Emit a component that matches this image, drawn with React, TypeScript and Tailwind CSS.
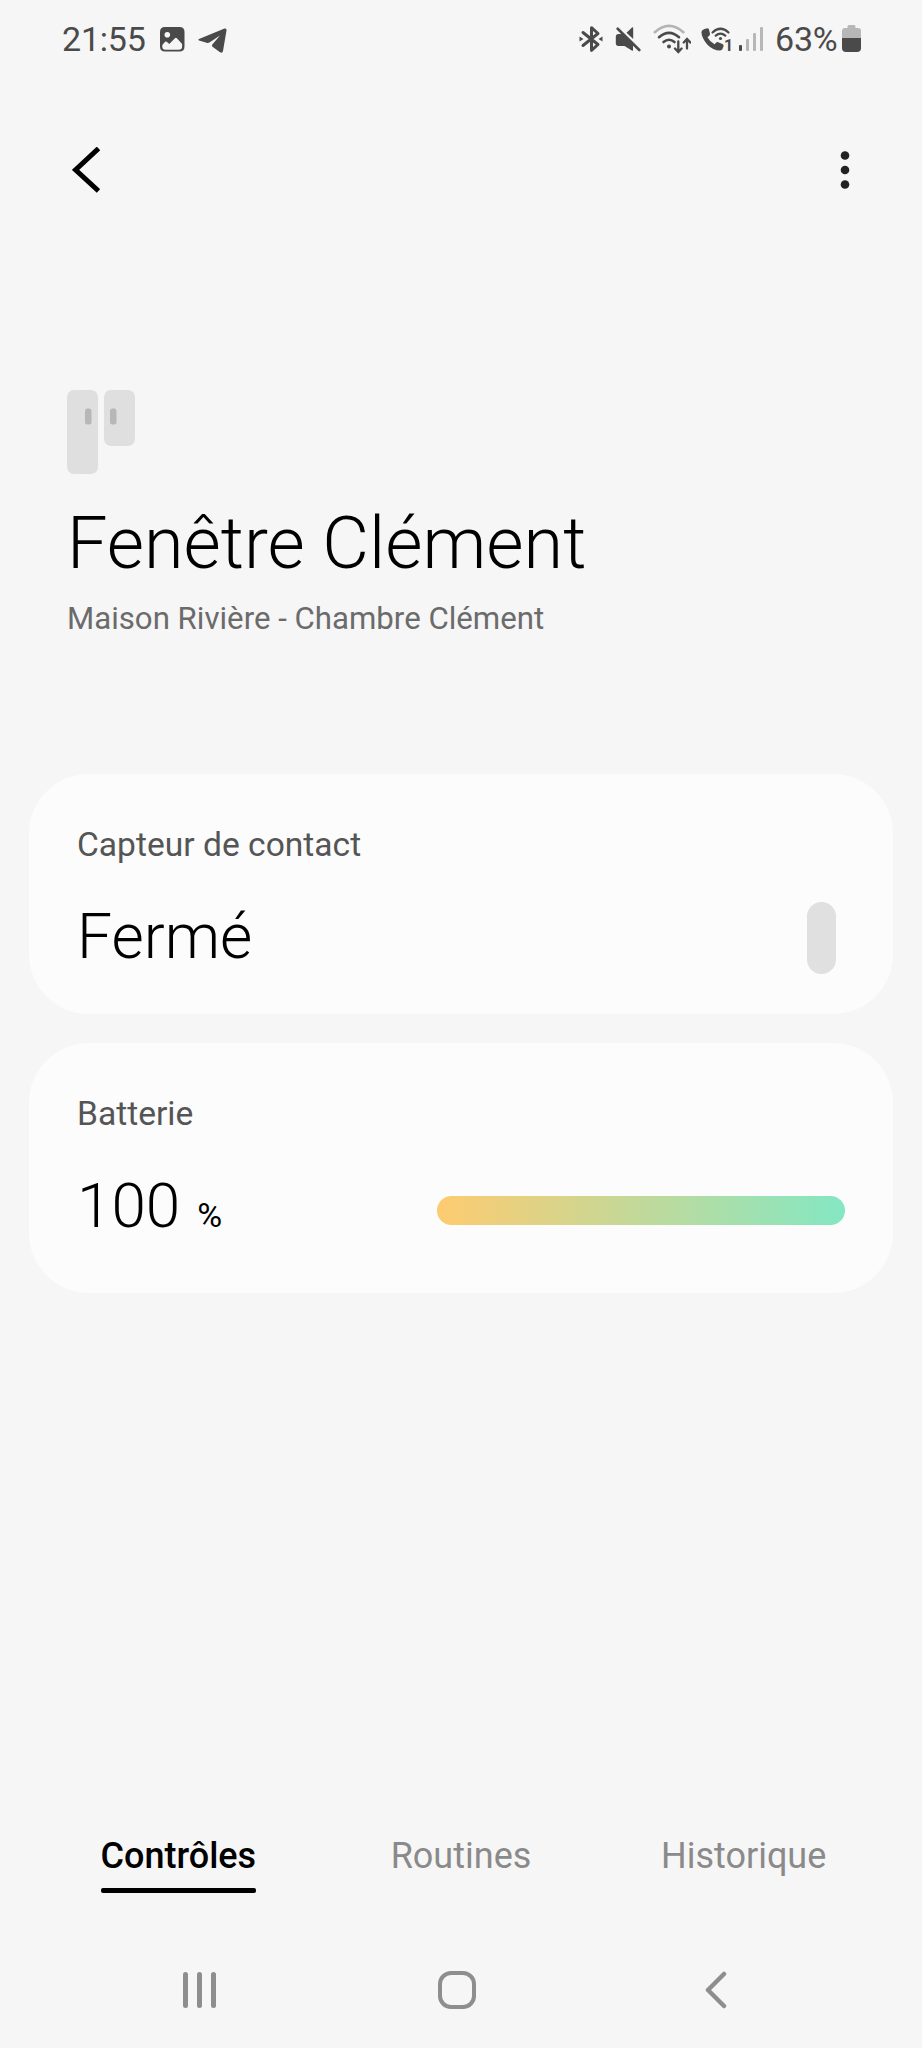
import React, { FC, ReactNode } from "react";

const StatusBar: FC = () => (
  <div className="flex h-[78px] items-center pl-[62px] pr-[61px] text-[34px] text-[#4a4a4a]">
    <span className="w-[84px] tracking-[-0.2px]">21:55</span>

    {/* picture */}
    <svg className="ml-[14px] h-[30px] w-[25px]" viewBox="0 0 25 30">
      <path
        fillRule="evenodd"
        fill="currentColor"
        d="M5 3h14.500q5 0 5 5v14.500q0 5-5 5H5q-5 0-5-5V8q0-5 5-5zM7.300 8a2.800 2.800 0 1 0 0 5.600a2.800 2.800 0 1 0 0-5.600zM2.300 21v1.500q0 3.300 3.200 3.300h13.200q3.400 0 3.400-3.300v-2.600l-5.200-5.600q-1-1-2 0l-5.600 5.700l-2.600-2.300q-.8-.6-1.600.1z"
      />
    </svg>

    {/* telegram */}
    <svg className="ml-[13px] h-[30px] w-[29px]" viewBox="0 0 29 30">
      <path
        fill="currentColor"
        d="M1 15L26.500 4.600q2.200-.6 2 1.800L25 27q-.5 2.600-3 1.200L14.500 22.700q-1.200-1 0-2.400L22 11.500l-10.600 7q-1.200.8-2.800.3L1 16.500q-1.400-.7 0-1.500z"
      />
    </svg>

    {/* bluetooth */}
    <svg
      className="ml-auto h-[30px] w-[24px]"
      viewBox="0 0 24 30"
      fill="none"
      stroke="currentColor"
      strokeWidth="3"
      strokeLinejoin="round"
      strokeLinecap="round"
    >
      <path d="M4 8.500L19 20.500L12.500 26.300V3.700L19 9.500L4 21.500" />
      <path d="M.5 12.500L4.500 15L.5 17.500zM23.500 12.500L19.500 15L23.500 17.500z" fill="currentColor" stroke="none" />
    </svg>

    {/* sound off */}
    <svg className="ml-[12px] h-[30px] w-[26px]" viewBox="0 0 26 30">
      <path
        fill="currentColor"
        d="M3.500 10H7l11 10.500V26q0 1.300-1.200.6L9.500 22H3.500Q.8 22 .8 19v-6q0-3 2.700-3zM11.500 8.800L17 3.600q1.200-.8 1.200.6V15z"
      />
      <path d="M2.700 4.700L24.300 26" stroke="currentColor" strokeWidth="2.600" strokeLinecap="round" />
    </svg>

    {/* wifi */}
    <svg
      className="ml-[12px] h-[30px] w-[38px]"
      viewBox="0 0 38 30"
      fill="none"
      stroke="currentColor"
      strokeWidth="2.600"
      strokeLinecap="round"
    >
      <path d="M1.800 8.200Q16-4.500 30.400 8.200" stroke="#b3b3b3" />
      <path d="M6 13.200Q16 4.500 26 13.200M10.500 18Q16 13.500 21.500 18" />
      <path d="M25.300 17.500V27M22 24.500L25.300 28L28.600 24.500M34 24.500V15.500M30.700 18.500L34 15L37.300 18.500" strokeWidth="2.300" />
      <circle cx="16" cy="22.500" r="2" fill="currentColor" stroke="none" />
    </svg>

    {/* wifi calling */}
    <span className="ml-[10px] flex h-[30px] w-[31px]">
      <svg className="h-[30px] w-[23px] shrink-0 overflow-visible" viewBox="0 0 23 30">
        <path
          fill="currentColor"
          d="M3.500 5L6.300 4.300Q7.600 4.300 8 5.600L9 9.700Q9.200 11 8 12L6.500 13.300Q9 18 13.500 20.300L15 18.700Q16 17.800 17.200 18.200L21.500 20Q23 20.800 22.500 22.300L21.700 24.500Q21 26.400 19 26.500Q12 26.500 6.200 20.400Q.6 14 .4 8Q.6 6 3.500 5z"
        />
        <g fill="none" stroke="currentColor" strokeWidth="2.200" strokeLinecap="round">
          <path d="M11.500 8.500Q19.500 1 27.500 8.500M14.700 11.700Q19.500 7.500 24.300 11.700" />
        </g>
        <circle cx="19.500" cy="14.500" r="1.600" fill="currentColor" />
      </svg>
      <span className="mt-[14px] text-[16px] leading-[15px] font-bold">1</span>
    </span>

    {/* signal */}
    <span className="ml-[7px] flex h-[24px] items-end gap-[4px]">
      <i className="h-[6px] w-[3px] rounded-[1px] bg-[#4a4a4a]" />
      <i className="h-[12px] w-[3px] rounded-[1px] bg-[#b7b7b7]" />
      <i className="h-[18px] w-[3px] rounded-[1px] bg-[#b7b7b7]" />
      <i className="h-[24px] w-[3px] rounded-[1px] bg-[#b7b7b7]" />
    </span>

    <span className="ml-[12px] w-[62px] whitespace-nowrap tracking-[-0.2px]">63%</span>

    {/* battery */}
    <svg className="ml-[5px] h-[30px] w-[19px]" viewBox="0 0 19 30">
      <path fill="#b7b7b7" d="M0 14V7q0-3 3-3h2.500V2.500q0-1.500 1.500-1.500h5q1.500 0 1.500 1.500V4H16q3 0 3 3v7z" />
      <path fill="currentColor" d="M0 14h19v10q0 4-4 4H4q-4 0-4-4z" />
    </svg>
  </div>
);

const DeviceIcon: FC = () => (
  <svg className="h-[84px] w-[68px]" viewBox="0 0 68 84">
    <rect width="31" height="84" rx="7" fill="#dfdfdf" />
    <rect x="37" width="31" height="56" rx="7" fill="#dfdfdf" />
    <rect x="18" y="18.500" width="6.500" height="16" rx="2.500" fill="#b7b7b7" />
    <rect x="43" y="18.500" width="6.500" height="16" rx="2.500" fill="#b7b7b7" />
  </svg>
);

interface CardProps {
  label: string;
  className: string;
  children: ReactNode;
}

const Card: FC<CardProps> = ({ label, className, children }) => (
  <section className={`mx-[29px] rounded-[60px] bg-[#fcfcfc] pl-12 pt-[51px] ${className}`}>
    <h2 className="text-[33.6px] leading-10 text-[#555555]">{label}</h2>
    <div className="mt-9 flex h-[72px] items-center justify-between">{children}</div>
  </section>
);

const tabs = ["Contrôles", "Routines", "Historique"];

export const App: FC = () => {
  return (
    <div className="flex h-[2048px] w-[922px] flex-col overflow-hidden bg-[#f6f6f6] font-[Roboto,sans-serif] text-black">
      <StatusBar />

      <header className="flex h-[184px] items-center justify-between pl-[72px] pr-[72px]">
        <svg className="h-[46px] w-[28px]" viewBox="0 0 28 46">
          <path d="M26.500 1.500L3.500 22.800L26.500 44" fill="none" stroke="black" strokeWidth="5" />
        </svg>
        <svg className="h-[40px] w-[10px]" viewBox="0 0 10 40">
          <circle cx="5" cy="5.500" r="4.300" fill="#222" />
          <circle cx="5" cy="20" r="4.300" fill="#222" />
          <circle cx="5" cy="34.500" r="4.300" fill="#222" />
        </svg>
      </header>

      <div className="mt-[128px] pl-[67px]">
        <DeviceIcon />
        <h1 className="mt-[26px] text-[72px] leading-[88px] font-light">Fenêtre Clément</h1>
        <p className="mt-[10px] text-[31.2px] leading-[41px] text-[#6b6b6b]">Maison Rivière - Chambre Clément</p>
      </div>

      <main className="mt-[135px] flex flex-col gap-[29px]">
        <Card label="Capteur de contact" className="h-[240px] pr-[57px]">
          <span className="text-[62.4px] leading-[72px] font-light">Fermé</span>
          <div className="mt-px h-[72px] w-[29px] rounded-full bg-[#e0e0e0]" />
        </Card>
        <Card label="Batterie" className="h-[250px] pr-12">
          <div className="flex items-baseline">
            <span className="text-[62px] leading-[72px] font-light">100</span>
            <span className="ml-[17px] text-[34px] leading-none">%</span>
          </div>
          <div className="mt-2 h-[29px] w-[408px] rounded-full bg-linear-to-r/srgb from-[#fecb70] to-[#84e7c3]" />
        </Card>
      </main>

      <nav className="mt-auto grid grid-cols-3 px-[37px]">
        {tabs.map((tab, i) => (
          <div key={tab} className="flex justify-center">
            <span
              className={
                i === 0
                  ? "text-[36px] leading-[44px] font-medium text-black"
                  : "text-[36px] leading-[44px] text-[#8a8a8a]"
              }
            >
              {tab}
              <i className={i === 0 ? "mt-[10px] block h-[5px] rounded-[2px] bg-black" : "mt-[10px] block h-[5px]"} />
            </span>
          </div>
        ))}
      </nav>

      <footer className="mb-[38px] mt-[77px] grid h-[40px] grid-cols-3 items-center justify-items-center pl-[70px] pr-[77px] text-[#8e8e8e]">
        <div className="flex h-9 gap-[9px]">
          <i className="w-[5px] rounded-full bg-current" />
          <i className="w-[5px] rounded-full bg-current" />
          <i className="w-[5px] rounded-full bg-current" />
        </div>
        <div className="h-[38px] w-[38px] rounded-[13px] border-[4.500px] border-current" />
        <svg className="h-[38px] w-[22px]" viewBox="0 0 22 38">
          <path
            d="M19 3L3 19L19 35"
            fill="none"
            stroke="currentColor"
            strokeWidth="4.500"
            strokeLinecap="round"
            strokeLinejoin="round"
          />
        </svg>
      </footer>
    </div>
  );
};

export default App;
